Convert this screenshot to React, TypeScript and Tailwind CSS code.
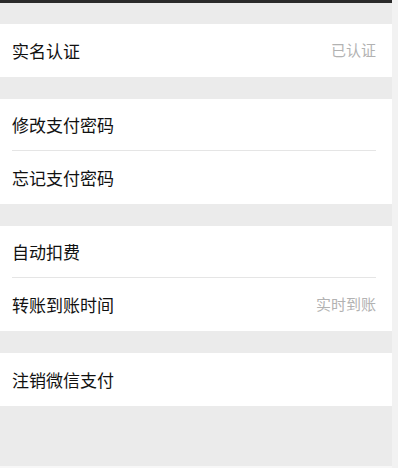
const groups: { label: string; value?: string }[][] = [
  [{ label: '实名认证', value: '已认证' }],
  [{ label: '修改支付密码' }, { label: '忘记支付密码' }],
  [{ label: '自动扣费' }, { label: '转账到账时间', value: '实时到账' }],
  [{ label: '注销微信支付' }],
];

const Row = ({ label, value, last }: { label: string; value?: string; last: boolean }) => (
  <div className={`flex items-center ${last ? 'h-[53px]' : 'h-[52px]'}`}>
    <div
      className={`flex h-full flex-1 items-center justify-between ml-3 mr-4 ${
        last ? '' : 'border-b border-[#e5e5e5]'
      }`}
    >
      <span className="text-[17px] text-[#111]">{label}</span>
      {value && <span className="text-[15px] text-[#b2b2b2]">{value}</span>}
    </div>
  </div>
);

export default function App() {
  return (
    <div
      className="flex h-[468px] w-[400px] bg-white"
      style={{ fontFamily: '"Noto Sans CJK SC", "Liberation Sans", sans-serif' }}
    >
      <div className="flex w-[392px] flex-col bg-[#ebebeb]">
        <div className="h-[3px] bg-[#2a2a2a]" />
        {groups.map((group, gi) => (
          <div
            key={gi}
            className={`flex flex-col bg-white ${gi === 0 ? 'mt-[21px]' : 'mt-[22px]'}`}
          >
            {group.map((item, i) => (
              <Row key={i} label={item.label} value={item.value} last={i === group.length - 1} />
            ))}
          </div>
        ))}
        <div className="flex-1" />
        <div className="h-[2px] bg-[#f7f7f7]" />
      </div>
      <div className="w-[6px] bg-[#f2f2f2]" />
    </div>
  );
}
